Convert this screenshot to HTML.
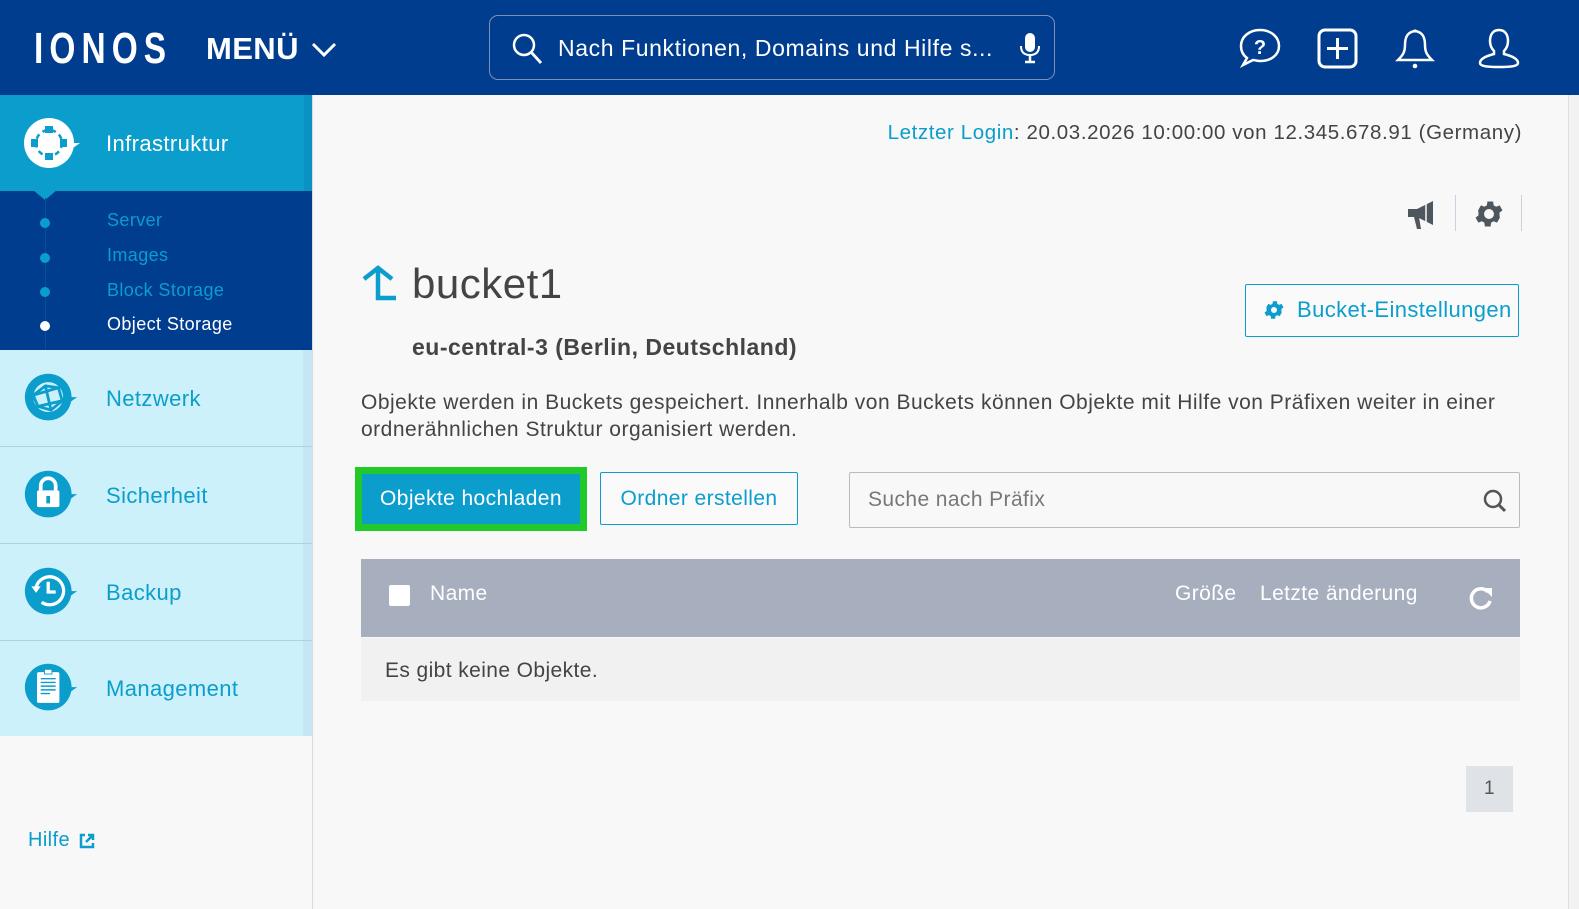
<!DOCTYPE html>
<html><head><meta charset="utf-8"><style>
*{box-sizing:border-box;margin:0;padding:0}
body{width:1579px;height:909px;overflow:hidden;background:#f8f8f8;font-family:"Liberation Sans",sans-serif;color:#444;position:relative}
.abs{position:absolute}
.hdr{left:0;top:0;width:1579px;height:95px;background:#003d8f}
.side{left:0;top:95px;width:313px;height:814px;background:#f8f8f8;border-right:1px solid #d4dce6}
.t{white-space:nowrap;letter-spacing:0.4px}
.lb{background:#cdf1fa;border-bottom:1px solid #a9d4e8;width:312px;height:97px;left:0}
.lb .strip{position:absolute;right:0;top:0;width:9px;height:100%;background:#c6e6f5}
.lb span{position:absolute;left:106px;top:36px;font-size:22px;color:#0b9dcc;letter-spacing:0.4px}
.ic{position:absolute;left:23px;width:56px;height:52px}
</style></head><body>
<div class="abs hdr"></div>
<div class="abs t" style="left:34px;top:24px;font-size:44px;font-weight:bold;color:#fff;letter-spacing:8px;transform:scaleX(0.76);transform-origin:left">IONOS</div>
<div class="abs t" style="left:206px;top:31px;font-size:31px;font-weight:bold;color:#fff">MENÜ</div>
<svg class="abs" style="left:310px;top:40px" width="28" height="20"><path d="M3 4 L14 15 L25 4" stroke="#fff" stroke-width="3" fill="none"/></svg>
<div class="abs" style="left:489px;top:15px;width:566px;height:65px;border:1px solid #7d8fb5;border-radius:9px"></div>
<svg class="abs" style="left:510px;top:32px" width="34" height="34"><circle cx="14" cy="13" r="10" stroke="#fff" stroke-width="2.5" fill="none"/><path d="M21 20 L31 31" stroke="#fff" stroke-width="2.8"/></svg>
<div class="abs t" style="left:558px;top:35px;font-size:23px;color:#fff;letter-spacing:0.6px">Nach Funktionen, Domains und Hilfe s...</div>
<svg class="abs" style="left:1018px;top:32px" width="24" height="32"><rect x="7" y="1" width="10" height="19" rx="5" fill="#fff"/><path d="M3 14 Q3 23 12 23 Q21 23 21 14" stroke="#fff" stroke-width="2" fill="none"/><path d="M12 23 V29 M7 30 H17" stroke="#fff" stroke-width="2.5"/></svg>
<svg class="abs" style="left:1238px;top:27px" width="44" height="44"><path d="M22 3 C33 3 41 10 41 19 C41 28 33 34 22 34 C19 34 17 33 15 33 L5 38 L9 31 C5 28 3 24 3 19 C3 10 11 3 22 3Z" stroke="#fff" stroke-width="2.5" fill="none"/><text x="22" y="27" font-size="20" font-weight="bold" fill="#fff" text-anchor="middle" font-family="Liberation Sans">?</text></svg>
<svg class="abs" style="left:1316px;top:27px" width="44" height="44"><rect x="3" y="3" width="37" height="37" rx="6" stroke="#fff" stroke-width="3" fill="none"/><path d="M21.5 11 V32 M11 21.5 H32" stroke="#fff" stroke-width="3"/></svg>
<svg class="abs" style="left:1393px;top:27px" width="44" height="44"><path d="M22 4 C14 5 12 11 12 18 C12 25 10 28 5 33 H39 C34 28 32 25 32 18 C32 11 30 5 22 4Z" stroke="#fff" stroke-width="2.5" fill="none"/><circle cx="22" cy="39" r="2.3" fill="#fff"/><circle cx="22" cy="4" r="1.6" fill="#fff"/></svg>
<svg class="abs" style="left:1476px;top:27px" width="46" height="44"><path d="M23 3 C16 3 14 9 14 14 C14 19 16 22 18 24 L18 27 C10 29 4 32 4 36 C4 39 10 40 23 40 C36 40 42 39 42 36 C42 32 36 29 28 27 L28 24 C30 22 32 19 32 14 C32 9 30 3 23 3Z" stroke="#fff" stroke-width="2.5" fill="none"/></svg>

<div class="abs side"></div>
<div class="abs" style="left:0;top:95px;width:312px;height:96px;background:#0b9dcc"></div>
<div class="abs" style="left:304px;top:95px;width:8px;height:96px;background:#0a93c2"></div>
<svg class="abs" style="left:22px;top:117px" width="60" height="54"><path d="M51 26 L58 26 L51 31Z" fill="#fff"/><circle cx="27" cy="26" r="25" fill="#fff"/><circle cx="27" cy="26" r="13" stroke="#0b9dcc" stroke-width="2.5" stroke-dasharray="5 4" fill="none"/><rect x="23" y="9" width="8" height="7" fill="#0b9dcc"/><rect x="23" y="36" width="8" height="7" fill="#0b9dcc"/><rect x="9" y="22" width="7" height="8" fill="#0b9dcc"/><rect x="38" y="22" width="7" height="8" fill="#0b9dcc"/></svg>
<div class="abs t" style="left:106px;top:131px;font-size:22px;color:#fff">Infrastruktur</div>
<div class="abs" style="left:0;top:191px;width:312px;height:159px;background:#003d8f"></div>
<svg class="abs" style="left:33px;top:190px" width="24" height="12"><path d="M0 0 H24 L12 10Z" fill="#0b9dcc"/></svg>
<div class="abs" style="left:45px;top:198px;width:1px;height:152px;background:#0a4e9a"></div>
<div class="abs" style="left:40px;top:218px;width:10px;height:10px;border-radius:50%;background:#0b9dcc"></div>
<div class="abs" style="left:40px;top:253px;width:10px;height:10px;border-radius:50%;background:#0b9dcc"></div>
<div class="abs" style="left:40px;top:287px;width:10px;height:10px;border-radius:50%;background:#0b9dcc"></div>
<div class="abs" style="left:40px;top:321px;width:10px;height:10px;border-radius:50%;background:#fff"></div>
<div class="abs t" style="left:107px;top:210px;font-size:18px;color:#0b9dcc">Server</div>
<div class="abs t" style="left:107px;top:245px;font-size:18px;color:#0b9dcc">Images</div>
<div class="abs t" style="left:107px;top:280px;font-size:18px;color:#0b9dcc">Block Storage</div>
<div class="abs t" style="left:107px;top:314px;font-size:18px;color:#fff">Object Storage</div>

<div class="abs lb" style="top:350px"><div class="strip"></div>
<svg class="ic" style="top:22px" viewBox="0 0 60 54"><path d="M51 26 L58 26 L51 31Z" fill="#0b9dcc"/><circle cx="27" cy="26" r="25" fill="#0b9dcc"/><circle cx="27" cy="26" r="16" fill="#cdf1fa"/><path d="M11 24 L24 14 L38 16 L42 30 L30 40 L16 36Z M24 14 L30 40 M11 24 L38 16 M16 36 L42 30" stroke="#0b9dcc" stroke-width="3" fill="none"/></svg>
<span>Netzwerk</span></div>
<div class="abs lb" style="top:447px"><div class="strip"></div>
<svg class="ic" style="top:22px" viewBox="0 0 60 54"><path d="M51 26 L58 26 L51 31Z" fill="#0b9dcc"/><circle cx="27" cy="26" r="25" fill="#0b9dcc"/><path d="M19 22 V17 A8 8 0 0 1 35 17 V22" stroke="#fff" stroke-width="4" fill="none"/><rect x="15" y="22" width="24" height="18" rx="2" fill="#fff"/><rect x="25" y="28" width="4" height="8" fill="#0b9dcc"/></svg>
<span>Sicherheit</span></div>
<div class="abs lb" style="top:544px"><div class="strip"></div>
<svg class="ic" style="top:22px" viewBox="0 0 60 54"><path d="M51 26 L58 26 L51 31Z" fill="#0b9dcc"/><circle cx="27" cy="26" r="25" fill="#0b9dcc"/><path d="M14 22 A15 15 0 1 1 20 38" stroke="#fff" stroke-width="3.5" fill="none"/><path d="M9 21 L19 21 L14 28Z" fill="#fff"/><path d="M27 16 V27 H35" stroke="#fff" stroke-width="3.5" fill="none"/></svg>
<span>Backup</span></div>
<div class="abs lb" style="top:641px;border-bottom:none;height:95px"><div class="strip"></div>
<svg class="ic" style="top:21px" viewBox="0 0 60 54"><path d="M51 26 L58 26 L51 31Z" fill="#0b9dcc"/><circle cx="27" cy="26" r="25" fill="#0b9dcc"/><rect x="15" y="10" width="24" height="33" rx="2" fill="#fff"/><rect x="23" y="7" width="8" height="5" fill="#fff" stroke="#0b9dcc"/><path d="M19 17 H35 M19 21 H35 M19 25 H35 M19 29 H35 M19 33 H29" stroke="#0b9dcc" stroke-width="1.5"/></svg>
<span style="top:35px">Management</span></div>

<div class="abs t" style="left:28px;top:829px;font-size:20px;color:#0b9dcc">Hilfe</div>
<svg class="abs" style="left:78px;top:832px" width="18" height="18"><path d="M7 3 H3 V15 H15 V11" stroke="#0b9dcc" stroke-width="2.5" fill="none"/><path d="M8 10 L15 3 M10 3 H15 V8" stroke="#0b9dcc" stroke-width="2.5" fill="none"/></svg>

<div class="abs" style="left:1568px;top:95px;width:11px;height:814px;background:#f2f2f2;border-left:1px solid #e0e0e0"></div>
<div class="abs t" style="right:57px;top:121px;font-size:20.5px;color:#444;letter-spacing:0.6px"><span style="color:#0b9dcc">Letzter Login</span>: 20.03.2026 10:00:00 von 12.345.678.91 (Germany)</div>
<svg class="abs" style="left:1405px;top:197px" width="36" height="34"><path d="M3 12 H12 L28 4 V28 L12 20 H3Z" fill="#4f575e"/><path d="M9 20 L12 32 H16 L14 20Z" fill="#4f575e"/><path d="M21 7 V25" stroke="#f8f8f8" stroke-width="1.5"/></svg>
<div class="abs" style="left:1455px;top:195px;width:1px;height:36px;background:#c9d2dd"></div>
<svg class="abs" style="left:1472px;top:197px" width="34" height="34" viewBox="0 0 24 24"><path fill="#4f575e" d="M19.4 13a7.5 7.5 0 0 0 0-2l2.1-1.6-2-3.5-2.5 1a7 7 0 0 0-1.7-1l-.4-2.7h-4l-.4 2.7a7 7 0 0 0-1.7 1l-2.5-1-2 3.5L4.6 11a7.5 7.5 0 0 0 0 2l-2.1 1.6 2 3.5 2.5-1a7 7 0 0 0 1.7 1l.4 2.7h4l.4-2.7a7 7 0 0 0 1.7-1l2.5 1 2-3.5zM12 15.5a3.5 3.5 0 1 1 0-7 3.5 3.5 0 0 1 0 7z"/></svg>
<div class="abs" style="left:1521px;top:195px;width:1px;height:36px;background:#c9d2dd"></div>

<svg class="abs" style="left:360px;top:265px" width="38" height="38"><path d="M4 14 L18 3 L32 14" stroke="#0b9dcc" stroke-width="4.5" fill="none"/><path d="M18 4 V33 H36" stroke="#0b9dcc" stroke-width="4.5" fill="none"/></svg>
<div class="abs t" style="left:412px;top:260px;font-size:42px;color:#444;letter-spacing:0.5px">bucket1</div>
<div class="abs t" style="left:412px;top:334px;font-size:23px;font-weight:bold;color:#444;letter-spacing:0.5px">eu-central-3 (Berlin, Deutschland)</div>
<div class="abs" style="left:1245px;top:284px;width:274px;height:53px;border:1px solid #0b9dcc;border-radius:2px;background:#fafafa"></div>
<svg class="abs" style="left:1262px;top:298px" width="24" height="24" viewBox="0 0 24 24"><path fill="#0b9dcc" d="M19.4 13a7.5 7.5 0 0 0 0-2l2.1-1.6-2-3.5-2.5 1a7 7 0 0 0-1.7-1l-.4-2.7h-4l-.4 2.7a7 7 0 0 0-1.7 1l-2.5-1-2 3.5L4.6 11a7.5 7.5 0 0 0 0 2l-2.1 1.6 2 3.5 2.5-1a7 7 0 0 0 1.7 1l.4 2.7h4l.4-2.7a7 7 0 0 0 1.7-1l2.5 1 2-3.5zM12 15a3 3 0 1 1 0-6 3 3 0 0 1 0 6z"/></svg>
<div class="abs t" style="left:1297px;top:297px;font-size:22px;color:#0b9dcc">Bucket-Einstellungen</div>

<div class="abs" style="left:361px;top:389px;width:1170px;font-size:21px;line-height:27px;color:#444;letter-spacing:0.5px">Objekte werden in Buckets gespeichert. Innerhalb von Buckets können Objekte mit Hilfe von Präfixen weiter in einer ordnerähnlichen Struktur organisiert werden.</div>

<div class="abs" style="left:355px;top:467px;width:232px;height:64px;background:#22c92a"></div>
<div class="abs" style="left:362px;top:474px;width:218px;height:50px;background:#0b9dcc"></div>
<div class="abs t" style="left:362px;top:487px;width:218px;text-align:center;font-size:21px;color:#fff">Objekte hochladen</div>
<div class="abs" style="left:600px;top:472px;width:198px;height:53px;border:1px solid #0b9dcc;border-radius:2px;background:#fafafa"></div>
<div class="abs t" style="left:600px;top:487px;width:198px;text-align:center;font-size:21px;color:#0b9dcc">Ordner erstellen</div>
<div class="abs" style="left:849px;top:472px;width:671px;height:56px;border:1px solid #bbb;border-radius:2px;background:#f8f8f8"></div>
<div class="abs t" style="left:868px;top:488px;font-size:21px;color:#777">Suche nach Präfix</div>
<svg class="abs" style="left:1482px;top:488px" width="26" height="26"><circle cx="11" cy="11" r="8" stroke="#555" stroke-width="2.5" fill="none"/><path d="M17 17 L23 23" stroke="#555" stroke-width="3"/></svg>

<div class="abs" style="left:361px;top:559px;width:1159px;height:78px;background:#a7afbf"></div>
<div class="abs" style="left:389px;top:585px;width:21px;height:21px;background:#fff;border-radius:2px"></div>
<div class="abs t" style="left:430px;top:582px;font-size:21px;color:#fff">Name</div>
<div class="abs t" style="left:1175px;top:582px;font-size:21px;color:#fff">Größe</div>
<div class="abs t" style="left:1260px;top:582px;font-size:21px;color:#fff">Letzte änderung</div>
<svg class="abs" style="left:1467px;top:584px" width="28" height="28"><path d="M21 8 A9.5 9.5 0 1 0 23 17" stroke="#fff" stroke-width="3.5" fill="none"/><path d="M16 4 L25 4 L25 13Z" fill="#fff"/></svg>
<div class="abs" style="left:361px;top:638px;width:1159px;height:63px;background:#f1f1f1"></div>
<div class="abs t" style="left:385px;top:659px;font-size:21px;color:#444">Es gibt keine Objekte.</div>

<div class="abs" style="left:1466px;top:766px;width:47px;height:46px;background:#dfe3e8"></div>
<div class="abs t" style="left:1466px;top:778px;width:47px;text-align:center;font-size:19px;color:#555">1</div>
</body></html>
